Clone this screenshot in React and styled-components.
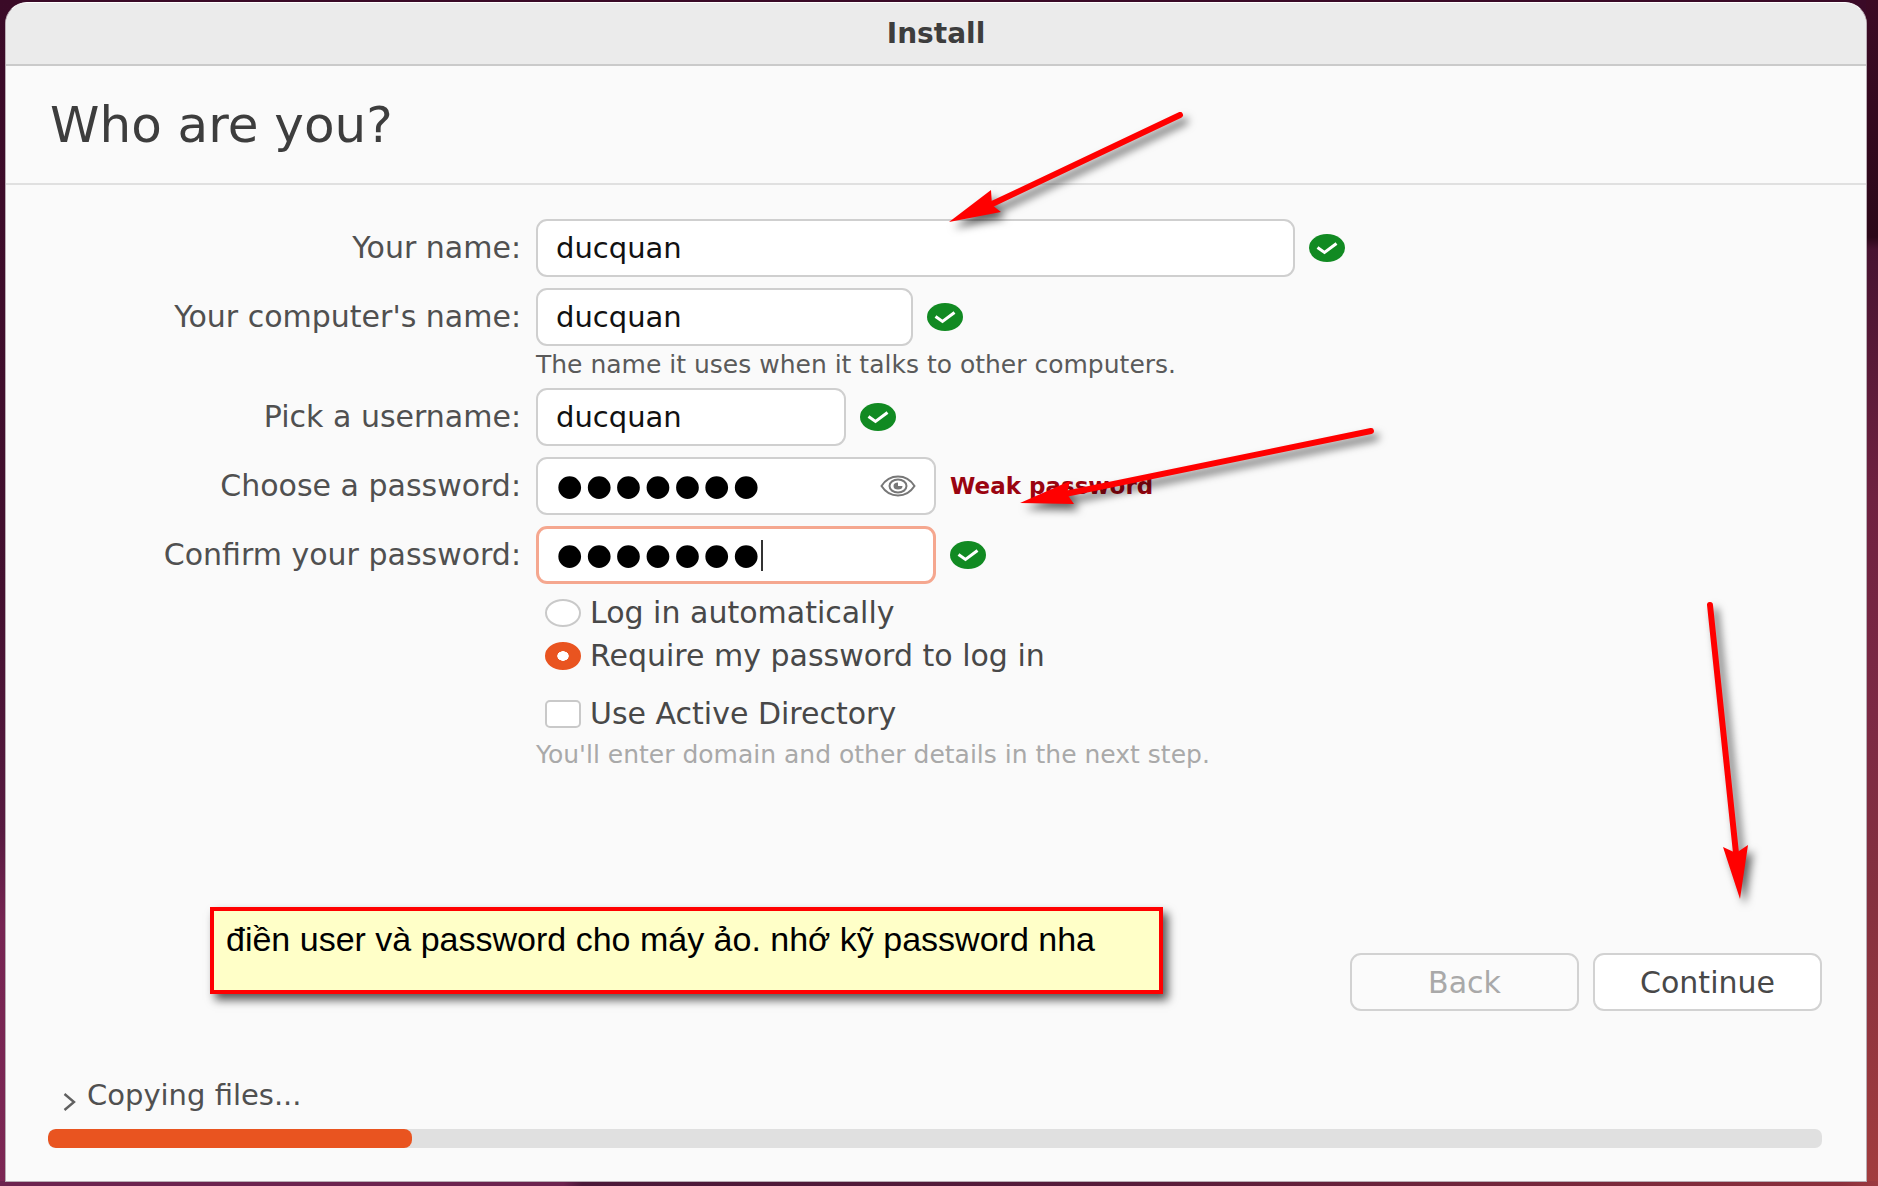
import React from "react";
import styled, { createGlobalStyle, css } from "styled-components";

const UI_FONT = `"DejaVu Sans", "Noto Sans", sans-serif`;

const GlobalStyle = createGlobalStyle`
  *, *::before, *::after { box-sizing: border-box; }
  body { margin: 0; }
`;

const Desktop = styled.div`
  position: relative;
  display: flex;
  min-height: 100vh;
  padding: 2px 11px 4px 5px;
  overflow: hidden;
  font-family: ${UI_FONT};
  background:
    linear-gradient(90deg, #6c224e 0%, #6c224e 30%, #4b1838 31%, #571b3a 60%, #8c2f3c 98%, #9c3a40 100%) bottom / 100% 5px no-repeat,
    linear-gradient(180deg, #3c0a24 0%, #2c0819 20%, #471330 21%, #6f2140 42%, #7c2944 60%, #84303f 75%, #a23c3e 100%) right / 12px 100% no-repeat,
    linear-gradient(180deg, #3a0a27 0%, #43102f 50%, #571a40 70%, #762452 78%, #7c2754 100%);
`;

const Window = styled.main`
  flex: 1;
  display: flex;
  flex-direction: column;
  min-width: 0;
  background: #fafafa;
  border: 1px solid #b9adb4;
  border-top-color: #fff;
  border-radius: 22px 22px 0 0;
  overflow: hidden;
  color: #484848;
`;

const TitleBar = styled.header`
  display: flex;
  align-items: center;
  justify-content: center;
  height: 63px;
  background: #ebebeb;
  border-bottom: 2px solid #cacaca;
  font-size: 28px;
  font-weight: 700;
  color: #3d3d3d;
`;

const PageHeading = styled.h1`
  display: flex;
  align-items: center;
  height: 119px;
  margin: 0;
  padding: 0 44px;
  border-bottom: 2px solid #e0e0e0;
  font-size: 50px;
  font-weight: 400;
  color: #3d3d3d;
`;

const Form = styled.form`
  flex: 1;
  display: flex;
  flex-direction: column;
  padding: 34px 44px 33px 0;
`;

const Fields = styled.div`
  display: flex;
  flex-direction: column;
  gap: 11px;
`;

const FieldRow = styled.div`
  display: grid;
  grid-template-columns: 515px 1fr;
  column-gap: 15px;
  align-items: center;
`;

const FieldLabel = styled.label`
  text-align: right;
  font-size: 30px;
  line-height: 34px;
  white-space: nowrap;
  color: #505050;
`;

const Control = styled.div`
  display: flex;
  align-items: center;
  gap: 14px;
`;

const InputBox = styled.div`
  position: relative;
  width: ${(p) => p.$width}px;
  height: 58px;
`;

const Input = styled.input`
  display: block;
  width: 100%;
  height: 100%;
  padding: 0 18px;
  border: 2px solid #cfcfcf;
  border-radius: 11px;
  background: #fff;
  outline: none;
  color: #111;
  font-family: ${UI_FONT};
  font-size: 29px;
  ${(p) =>
    p.type === "password" &&
    css`
      padding: 0 17px;
      color: #000;
      font-family: "Liberation Sans", sans-serif;
      font-size: 84px;
      line-height: 58px;
    `}
  ${(p) =>
    p.$focused &&
    css`
      padding: 0 16px;
      border: 3px solid #f5a78f;
    `}
`;

const Caret = styled.span`
  position: absolute;
  top: 14px;
  left: 225px;
  width: 2px;
  height: 31px;
  background: #333;
`;

const RevealButton = styled.button`
  position: absolute;
  top: 18px;
  right: 20px;
  display: flex;
  padding: 0;
  border: 0;
  background: none;
`;

const Strength = styled.span`
  font-size: 23px;
  font-weight: 700;
  color: #9a0410;
`;

const Hint = styled.p`
  margin: ${(p) => (p.$muted ? "0" : "-2px 0 2px")} 530px;
  margin-right: 0;
  font-size: 25px;
  line-height: ${(p) => (p.$muted ? 40 : 20)}px;
  color: ${(p) => (p.$muted ? "#a9a9a9" : "#5a5a5a")};
`;

const NameHint = styled(Hint)`
  margin: -2px 0 2px 530px;
`;

const DirectoryHint = styled(Hint)`
  margin: 0 0 0 530px;
`;

const Options = styled.div`
  display: flex;
  flex-direction: column;
  margin: 7px 0 0 539px;
`;

const Option = styled.label`
  display: flex;
  align-items: center;
  gap: 9px;
  height: 43px;
  margin-top: ${(p) => (p.$spaced ? 15 : 0)}px;
  font-size: 30px;
  color: #484848;
`;

const Toggle = styled.input`
  appearance: none;
  width: 36px;
  height: 28px;
  margin: 0;
  border: 2px solid #c9c9c9;
  border-radius: ${(p) => (p.type === "radio" ? "50%" : "5px")};
  background: #fff;
  &:checked {
    border-color: #e95420;
    background: radial-gradient(ellipse 6px 5px, #fff 90%, #e95420 100%);
  }
`;

const Actions = styled.div`
  display: flex;
  justify-content: flex-end;
  gap: 14px;
  margin-top: auto;
`;

const ActionButton = styled.button`
  width: 229px;
  height: 58px;
  border: 2px solid #d2d2d2;
  border-radius: 11px;
  background: #fff;
  font-family: ${UI_FONT};
  font-size: 30px;
  color: #484848;
  &:disabled {
    background: #fbfbfb;
    color: #a9a9a9;
  }
`;

const Status = styled.div`
  margin: 64px 0 0 42px;
`;

const StatusToggle = styled.button`
  display: flex;
  align-items: center;
  gap: 11px;
  height: 40px;
  padding: 0 0 0 15px;
  border: 0;
  background: none;
  font-family: ${UI_FONT};
  font-size: 29px;
  color: #505050;
  svg { margin-top: 14px; }
`;

const Track = styled.div`
  height: 19px;
  margin-top: 14px;
  border-radius: 7px;
  background: #e0e0e0;
  overflow: hidden;
`;

const Fill = styled.div`
  height: 100%;
  border-radius: 8px;
  background: #e95420;
`;

const Callout = styled.aside`
  position: absolute;
  top: 907px;
  left: 210px;
  width: 953px;
  height: 87px;
  padding: 8px 12px;
  border: 4px solid #f00;
  background: #ffffc8;
  box-shadow: 5px 6px 9px rgba(0, 0, 0, 0.65);
  font-family: "Liberation Sans", Arial, sans-serif;
  font-size: 34px;
  line-height: 40px;
  white-space: nowrap;
  color: #000;
`;

const ArrowLayer = styled.svg`
  position: absolute;
  top: 0;
  left: 0;
  pointer-events: none;
  filter: drop-shadow(5px 6px 4px rgba(0, 0, 0, 0.6));
`;

const Valid = () => (
  <svg width="36" height="28" viewBox="0 0 36 28" role="img" aria-label="Valid">
    <ellipse cx="18" cy="14" rx="18" ry="14" fill="#118a22" />
    <path d="M8.5 13.5 L15.5 18.5 L27.5 9.5" fill="none" stroke="#fff" strokeWidth="3" />
  </svg>
);

const Eye = () => (
  <svg width="36" height="22" viewBox="0 0 36 22" fill="none" stroke="#777" strokeWidth="2">
    <path d="M1.5 11 C6 4 12 1.5 18 1.5 S30 4 34.5 11 C30 18 24 20.5 18 20.5 S6 18 1.5 11 Z" />
    <ellipse cx="18" cy="11" rx="8.5" ry="6.5" />
    <path d="M18 7.5 A4.5 3.5 0 1 0 22.5 11 L18 11 Z" fill="#777" stroke="none" />
  </svg>
);

const Chevron = () => (
  <svg width="13" height="18" viewBox="0 0 13 18" fill="none" stroke="#606060" strokeWidth="2.4">
    <path d="M1.5 1 L11 9 L1.5 17" />
  </svg>
);

const arrows = [
  { tail: [1180, 115], neck: [990, 205], head: "949,222 991,190 992,205 1001,212" },
  { tail: [1371, 431], neck: [1065, 494], head: "1020,503 1070,481 1067,494 1074,504" },
  { tail: [1710, 605], neck: [1736, 853], head: "1740,899 1723,847 1736,853 1748,845" },
];

const Field = ({ id, label, width, type = "text", value, focused, inner, children }) => (
  <FieldRow>
    <FieldLabel htmlFor={id}>{label}</FieldLabel>
    <Control>
      <InputBox $width={width}>
        <Input id={id} type={type} defaultValue={value} $focused={focused} autoComplete="off" spellCheck={false} />
        {inner}
      </InputBox>
      {children}
    </Control>
  </FieldRow>
);

export default function App() {
  const progress = 20.5;
  return (
    <Desktop>
      <GlobalStyle />
      <Window>
        <TitleBar>Install</TitleBar>
        <PageHeading>Who are you?</PageHeading>
        <Form onSubmit={(e) => e.preventDefault()}>
          <Fields>
            <Field id="name" label="Your name:" width={759} value="ducquan"><Valid /></Field>
            <Field id="host" label="Your computer's name:" width={377} value="ducquan"><Valid /></Field>
            <NameHint>The name it uses when it talks to other computers.</NameHint>
            <Field id="user" label="Pick a username:" width={310} value="ducquan"><Valid /></Field>
            <Field
              id="password"
              label="Choose a password:"
              width={400}
              type="password"
              value="ducquan"
              inner={<RevealButton type="button" aria-label="Show password"><Eye /></RevealButton>}
            >
              <Strength>Weak password</Strength>
            </Field>
            <Field id="confirm" label="Confirm your password:" width={400} type="password" value="ducquan" focused inner={<Caret />}>
              <Valid />
            </Field>
          </Fields>
          <Options>
            <Option><Toggle type="radio" name="login" />Log in automatically</Option>
            <Option><Toggle type="radio" name="login" defaultChecked />Require my password to log in</Option>
            <Option $spaced><Toggle type="checkbox" />Use Active Directory</Option>
          </Options>
          <DirectoryHint $muted>You'll enter domain and other details in the next step.</DirectoryHint>
          <Actions>
            <ActionButton type="button" disabled>Back</ActionButton>
            <ActionButton type="submit">Continue</ActionButton>
          </Actions>
          <Status>
            <StatusToggle type="button"><Chevron />Copying files...</StatusToggle>
            <Track role="progressbar" aria-label="Copying files" aria-valuenow={progress}>
              <Fill style={{ width: `${progress}%` }} />
            </Track>
          </Status>
        </Form>
      </Window>
      <Callout>điền user và password cho máy ảo. nhớ kỹ password nha</Callout>
      <ArrowLayer width="1878" height="1186" viewBox="0 0 1878 1186" aria-hidden="true">
        {arrows.map(({ tail, neck, head }) => (
          <g key={head}>
            <line x1={tail[0]} y1={tail[1]} x2={neck[0]} y2={neck[1]} stroke="#f00" strokeWidth="6" strokeLinecap="round" />
            <polygon points={head} fill="#f00" />
          </g>
        ))}
      </ArrowLayer>
    </Desktop>
  );
}
